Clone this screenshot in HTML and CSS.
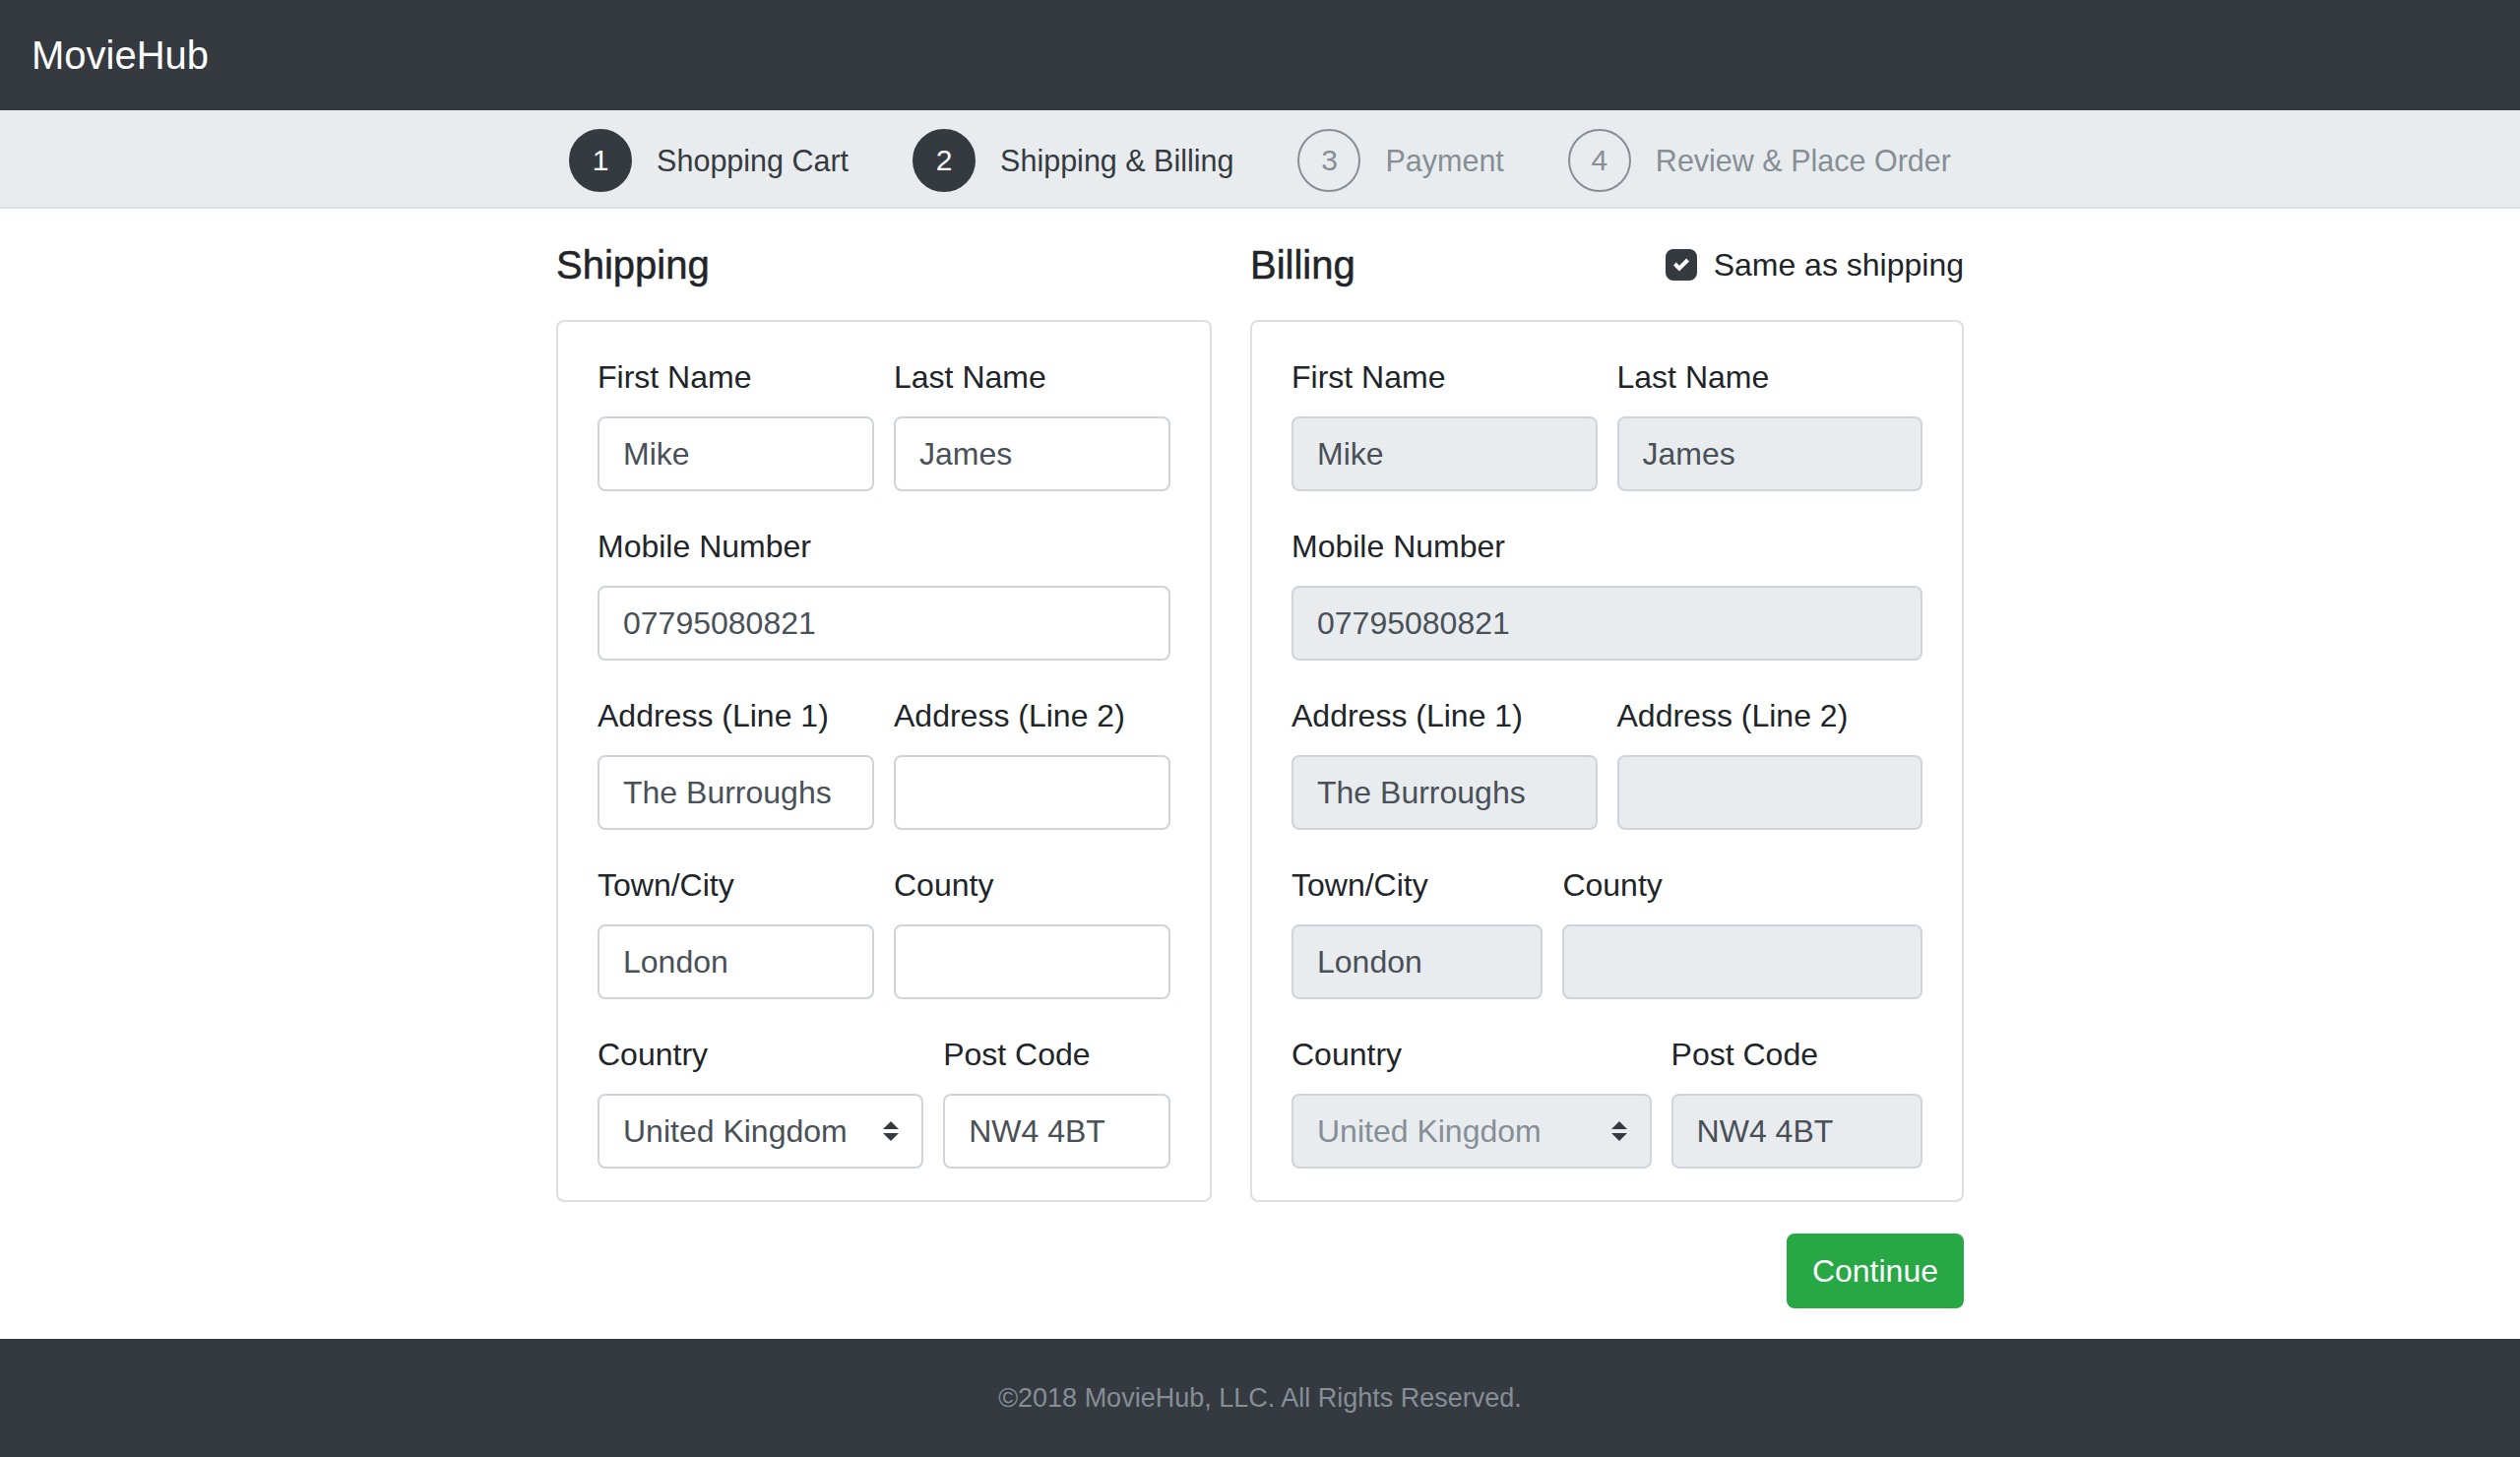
FILE: index.html
```html
<!DOCTYPE html>
<html lang="en">
<head>
<meta charset="utf-8">
<title>MovieHub – Checkout</title>
<link rel="stylesheet" href="styles.css">
</head>
<body>
<header class="navbar">
  <span class="brand">MovieHub</span>
</header>

<nav class="steps">
  <div class="step is-done"><span class="step-num">1</span><span class="step-label">Shopping Cart</span></div>
  <div class="step is-done"><span class="step-num">2</span><span class="step-label">Shipping &amp; Billing</span></div>
  <div class="step"><span class="step-num">3</span><span class="step-label">Payment</span></div>
  <div class="step"><span class="step-num">4</span><span class="step-label">Review &amp; Place Order</span></div>
</nav>

<main class="checkout">
  <section class="panel">
    <div class="panel-head"><h2 class="panel-title">Shipping</h2></div>
    <div class="card">
      <div class="form-row cols-2">
        <div class="field"><label class="field-label">First Name</label><input class="field-input" value="Mike"></div>
        <div class="field"><label class="field-label">Last Name</label><input class="field-input" value="James"></div>
      </div>
      <div class="form-row">
        <div class="field"><label class="field-label">Mobile Number</label><input class="field-input" value="07795080821"></div>
      </div>
      <div class="form-row cols-2">
        <div class="field"><label class="field-label">Address (Line 1)</label><input class="field-input" value="The Burroughs"></div>
        <div class="field"><label class="field-label">Address (Line 2)</label><input class="field-input" value=""></div>
      </div>
      <div class="form-row cols-2">
        <div class="field"><label class="field-label">Town/City</label><input class="field-input" value="London"></div>
        <div class="field"><label class="field-label">County</label><input class="field-input" value=""></div>
      </div>
      <div class="form-row cols-7-5">
        <div class="field"><label class="field-label">Country</label>
          <div class="select-wrap">
            <select class="field-input field-select"><option>United Kingdom</option></select>
            <svg class="select-arrows" viewBox="0 0 4 5" width="16" height="20"><path d="M2 0L0 2h4zm0 5L0 3h4z" fill="#343a40"/></svg>
          </div>
        </div>
        <div class="field"><label class="field-label">Post Code</label><input class="field-input" value="NW4 4BT"></div>
      </div>
    </div>
  </section>

  <section class="panel">
    <div class="panel-head">
      <h2 class="panel-title">Billing</h2>
      <label class="same-as">
        <span class="checkbox"><svg viewBox="0 0 8 8" width="16" height="16"><path fill="#fff" d="M6.564.75l-3.59 3.612-1.538-1.55L0 4.26 2.974 7.25 8 2.193z"/></svg></span>
        <span>Same as shipping</span>
      </label>
    </div>
    <div class="card">
      <div class="form-row cols-2">
        <div class="field"><label class="field-label">First Name</label><input class="field-input" value="Mike" disabled></div>
        <div class="field"><label class="field-label">Last Name</label><input class="field-input" value="James" disabled></div>
      </div>
      <div class="form-row">
        <div class="field"><label class="field-label">Mobile Number</label><input class="field-input" value="07795080821" disabled></div>
      </div>
      <div class="form-row cols-2">
        <div class="field"><label class="field-label">Address (Line 1)</label><input class="field-input" value="The Burroughs" disabled></div>
        <div class="field"><label class="field-label">Address (Line 2)</label><input class="field-input" value="" disabled></div>
      </div>
      <div class="form-row cols-5-7">
        <div class="field"><label class="field-label">Town/City</label><input class="field-input" value="London" disabled></div>
        <div class="field"><label class="field-label">County</label><input class="field-input" value="" disabled></div>
      </div>
      <div class="form-row cols-7-5">
        <div class="field"><label class="field-label">Country</label>
          <div class="select-wrap">
            <select class="field-input field-select" disabled><option>United Kingdom</option></select>
            <svg class="select-arrows" viewBox="0 0 4 5" width="16" height="20"><path d="M2 0L0 2h4zm0 5L0 3h4z" fill="#343a40"/></svg>
          </div>
        </div>
        <div class="field"><label class="field-label">Post Code</label><input class="field-input" value="NW4 4BT" disabled></div>
      </div>
    </div>
  </section>

  <div class="actions">
    <button class="btn-continue" type="button">Continue</button>
  </div>
</main>

<footer class="footer">©2018 MovieHub, LLC. All Rights Reserved.</footer>
</body>
</html>
```

FILE: styles.css
```css
* { box-sizing: border-box; }
html, body { margin: 0; }
body {
  font-family: "Liberation Sans", Arial, sans-serif;
  font-size: 32px;
  line-height: 48px;
  color: #212529;
  background: #fff;
}

.navbar {
  height: 112px;
  background: #343a40;
  display: flex;
  align-items: center;
  padding: 0 32px;
}
.brand { color: #fff; font-size: 40px; line-height: 60px; }

.steps {
  display: flex;
  justify-content: center;
  align-items: center;
  gap: 65px;
  padding: 19px 0 15px;
  background: #e9ecef;
  border-bottom: 2px solid #dee2e6;
}
.step {
  display: flex;
  align-items: center;
  gap: 25px;
  font-size: 30.5px;
  color: #868e96;
}
.step-num {
  width: 64px;
  height: 64px;
  border-radius: 50%;
  border: 2px solid #868e96;
  display: flex;
  align-items: center;
  justify-content: center;
  font-size: 30px;
  line-height: 1;
}
.step.is-done { color: #343a40; }
.step.is-done .step-num { background: #343a40; border-color: #343a40; color: #fff; }

.checkout {
  display: grid;
  grid-template-columns: 666px 725px;
  column-gap: 39px;
  justify-content: center;
  padding: 33px 0 31px;
}
.panel-head {
  display: flex;
  align-items: center;
  justify-content: space-between;
  height: 48px;
  margin-bottom: 32px;
}
.panel-title {
  margin: 0;
  font-size: 40px;
  line-height: 48px;
  font-weight: 500;
  color: #212529;
  -webkit-text-stroke: 0.5px #212529;
}
.same-as {
  display: flex;
  align-items: center;
  gap: 17px;
  font-size: 32px;
}
.checkbox {
  width: 32px;
  height: 32px;
  border-radius: 8px;
  background: #343a40;
  display: flex;
  align-items: center;
  justify-content: center;
}

.card {
  border: 2px solid #dfdfdf;
  border-radius: 8px;
  padding: 32px 40px;
}
.form-row {
  display: grid;
  grid-template-columns: 1fr;
  column-gap: 20px;
  margin-bottom: 32px;
}
.form-row:last-child { margin-bottom: 0; }
.form-row.cols-2 { grid-template-columns: 1fr 1fr; }
.form-row.cols-7-5 { grid-template-columns: calc((100% + 20px) * 7 / 12 - 20px) 1fr; }
.form-row.cols-5-7 { grid-template-columns: calc((100% + 20px) * 5 / 12 - 20px) 1fr; }

.field { min-width: 0; }
.field-label {
  display: block;
  margin-bottom: 16px;
  line-height: 48px;
}
.field-input {
  display: block;
  width: 100%;
  height: 76px;
  padding: 12px 24px;
  font-family: inherit;
  font-size: 32px;
  line-height: 48px;
  color: #495057;
  background: #fff;
  border: 2px solid #ced4da;
  border-radius: 8px;
  outline: none;
  margin: 0;
}
.field-input:disabled {
  background: #e9ecef;
  color: #495057;
  -webkit-text-fill-color: #495057;
  opacity: 1;
}
.select-wrap { position: relative; }
.field-select {
  appearance: none;
  -webkit-appearance: none;
  padding-right: 64px;
}
.field-select:disabled { color: #868e96; -webkit-text-fill-color: #868e96; }
.select-arrows {
  position: absolute;
  right: 25px;
  top: 28px;
}

.actions {
  grid-column: 1 / -1;
  display: flex;
  justify-content: flex-end;
  margin-top: 32px;
}
.btn-continue {
  font-family: inherit;
  font-size: 32px;
  line-height: 48px;
  padding: 12px 24px;
  color: #fff;
  background: #28a745;
  border: 2px solid #28a745;
  border-radius: 8px;
  cursor: pointer;
}

.footer {
  background: #343a40;
  color: #868e96;
  text-align: center;
  font-size: 27px;
  line-height: 48px;
  padding: 36px 0;
}
```
